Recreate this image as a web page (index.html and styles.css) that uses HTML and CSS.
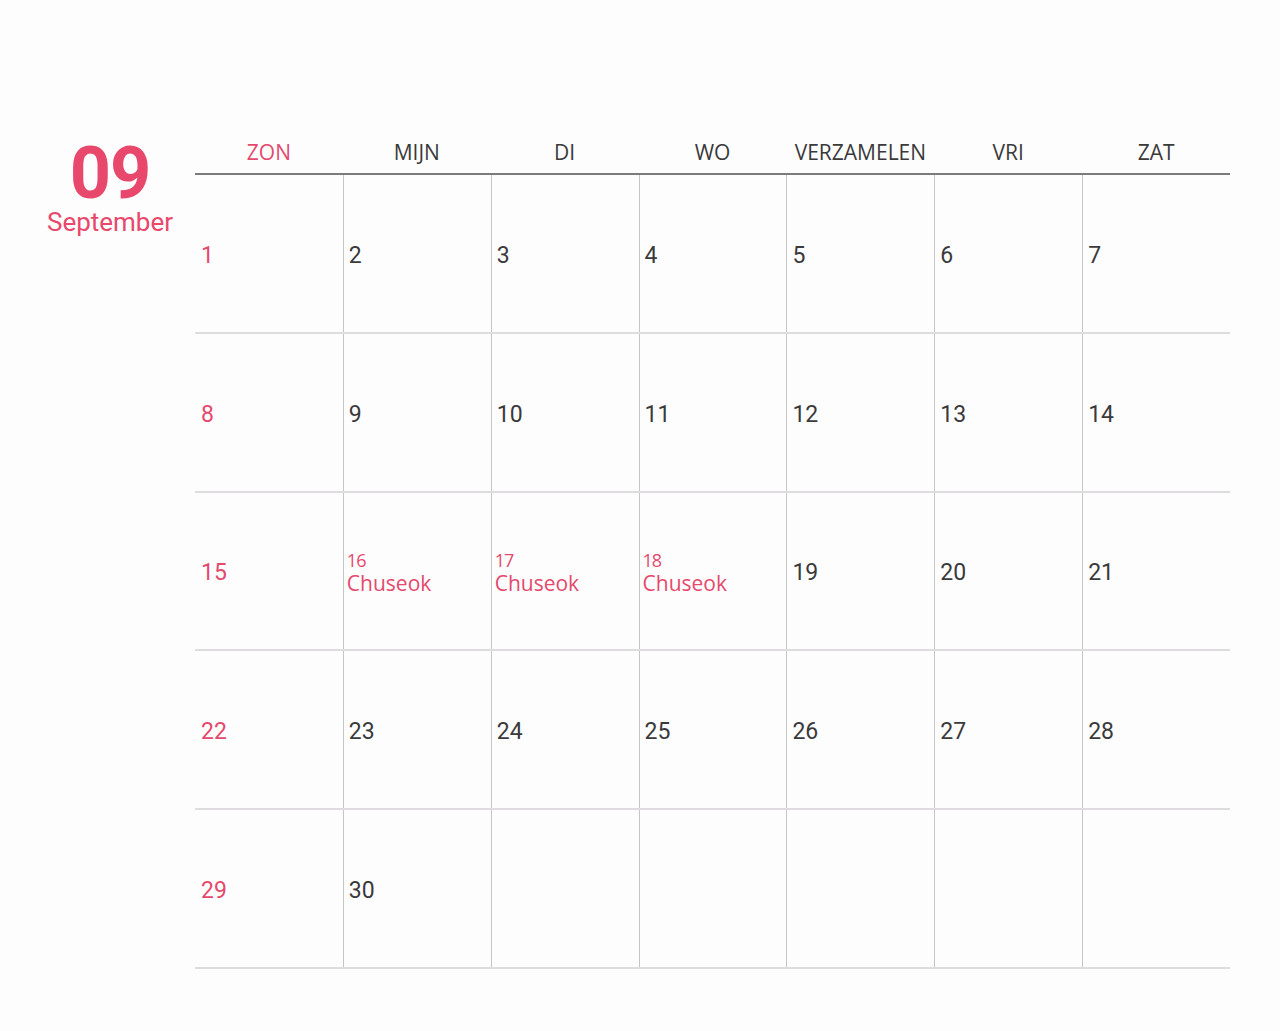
FILE: index.html
```html
<!DOCTYPE html>
<html>
<head>
<meta charset="utf-8">
<link rel="stylesheet" href="styles.css">
</head>
<body>
<div class="page">
  <aside class="month">
    <div class="month-num">09</div>
    <div class="month-name">September</div>
  </aside>
  <div class="calendar">
    <div class="head">
      <div class="hd sun">ZON</div>
      <div class="hd">MIJN</div>
      <div class="hd">DI</div>
      <div class="hd">WO</div>
      <div class="hd">VERZAMELEN</div>
      <div class="hd">VRI</div>
      <div class="hd">ZAT</div>
    </div>
    <div class="week">
      <div class="cell sun"><span class="num">1</span></div>
      <div class="cell"><span class="num">2</span></div>
      <div class="cell"><span class="num">3</span></div>
      <div class="cell"><span class="num">4</span></div>
      <div class="cell"><span class="num">5</span></div>
      <div class="cell"><span class="num">6</span></div>
      <div class="cell"><span class="num">7</span></div>
    </div>
    <div class="week">
      <div class="cell sun"><span class="num">8</span></div>
      <div class="cell"><span class="num">9</span></div>
      <div class="cell"><span class="num">10</span></div>
      <div class="cell"><span class="num">11</span></div>
      <div class="cell"><span class="num">12</span></div>
      <div class="cell"><span class="num">13</span></div>
      <div class="cell"><span class="num">14</span></div>
    </div>
    <div class="week">
      <div class="cell sun"><span class="num">15</span></div>
      <div class="cell holiday"><span class="hnum">16</span><span class="hname">Chuseok</span></div>
      <div class="cell holiday"><span class="hnum">17</span><span class="hname">Chuseok</span></div>
      <div class="cell holiday"><span class="hnum">18</span><span class="hname">Chuseok</span></div>
      <div class="cell"><span class="num">19</span></div>
      <div class="cell"><span class="num">20</span></div>
      <div class="cell"><span class="num">21</span></div>
    </div>
    <div class="week">
      <div class="cell sun"><span class="num">22</span></div>
      <div class="cell"><span class="num">23</span></div>
      <div class="cell"><span class="num">24</span></div>
      <div class="cell"><span class="num">25</span></div>
      <div class="cell"><span class="num">26</span></div>
      <div class="cell"><span class="num">27</span></div>
      <div class="cell"><span class="num">28</span></div>
    </div>
    <div class="week">
      <div class="cell sun"><span class="num">29</span></div>
      <div class="cell"><span class="num">30</span></div>
      <div class="cell"></div>
      <div class="cell"></div>
      <div class="cell"></div>
      <div class="cell"></div>
      <div class="cell"></div>
    </div>
  </div>
</div>
</body>
</html>
```
FILE: styles.css
```css
html, body {
  margin: 0;
  padding: 0;
  background: #fefdfe;
}
body {
  font-family: Roboto, "Liberation Sans", sans-serif;
  color: #333;
}
.page {
  display: flex;
  padding-top: 128px;
  width: 1280px;
  box-sizing: border-box;
}
.month {
  width: 170px;
  margin-left: 25px;
  text-align: center;
  color: #e8486b;
  padding-top: 18px;
}
.month-num {
  font-weight: 700;
  font-size: 72px;
  line-height: 56px;
  letter-spacing: -1px;
}
.month-name {
  font-size: 26px;
  line-height: 28px;
  margin-top: 6px;
}
.calendar {
  width: 1035px;
}
.head {
  display: grid;
  grid-template-columns: repeat(7, 1fr);
  height: 47px;
  box-sizing: border-box;
  border-bottom: 2px solid #7b7b7b;
}
.hd {
  font-family: "Open Sans", "Noto Sans", sans-serif;
  font-size: 21px;
  line-height: 26px;
  text-align: center;
  padding-top: 11px;
  color: #3a3a3a;
}
.hd.sun {
  color: #e5496d;
}
.week {
  display: grid;
  grid-template-columns: repeat(7, 1fr);
  height: 158.75px;
  box-sizing: border-box;
  border-bottom: 2px solid #dedcde;
}
.cell {
  display: flex;
  flex-direction: column;
  justify-content: center;
  padding-left: 5px;
  border-left: 1px solid #c6c4c6;
}
.cell:first-child {
  border-left: none;
  padding-left: 6px;
}
.num {
  font-size: 23px;
  line-height: 28px;
  color: #3a3a3a;
  padding-top: 5px;
}
.cell.sun .num {
  color: #e5496d;
}
.holiday {
  color: #e5496d;
  font-family: "Open Sans", "Noto Sans", sans-serif;
  padding-left: 3px;
  padding-top: 3px;
}
.hnum {
  font-size: 18px;
  line-height: 22px;
  letter-spacing: -1px;
}
.hname {
  font-size: 21px;
  line-height: 24px;
}
```
